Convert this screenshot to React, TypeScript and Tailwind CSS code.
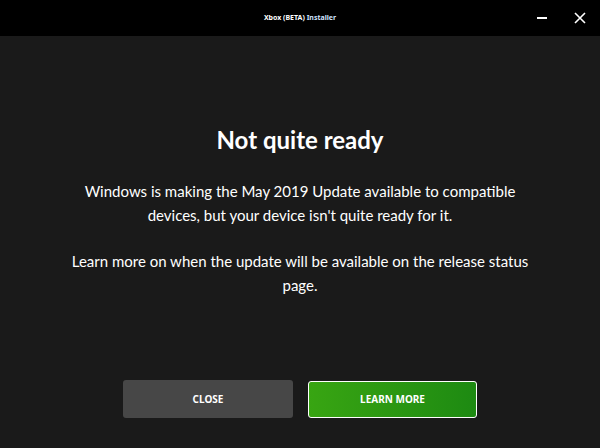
export default function App() {
  return (
    <div className="w-[600px] h-[448px] flex flex-col bg-[#1a1a1a] text-white overflow-hidden" style={{ fontFamily: 'Lato, "Noto Sans", sans-serif' }}>
      <div className="h-9 bg-black flex items-center relative shrink-0">
        <div className="flex-1 text-center text-[7px] font-bold" style={{ fontFamily: '"Noto Sans", sans-serif' }}>
          Xbox (BETA) <span className="text-[#cfe3ff]">Installer</span>
        </div>
        <div className="absolute right-0 top-0 h-9 flex items-center">
          <button className="w-9 h-9 flex items-center justify-center">
            <span className="block w-[10px] h-[2px] bg-white" />
          </button>
          <button className="w-10 h-9 flex items-center justify-center">
            <svg width="12" height="12" viewBox="0 0 12 12" stroke="white" strokeWidth="1.6">
              <path d="M1 1L11 11M11 1L1 11" />
            </svg>
          </button>
        </div>
      </div>

      <div className="flex-1 flex flex-col items-center">
        <h1 className="mt-[86px] text-[24px] font-bold leading-[36px]">Not quite ready</h1>
        <div className="mt-[21px] w-[480px] text-center text-[15px] leading-[24px]">
          <p>Windows is making the May 2019 Update available to compatible devices, but your device isn't quite ready for it.</p>
          <p className="mt-[22px]">Learn more on when the update will be available on the release status page.</p>
        </div>

        <div className="mt-auto mb-[30px] flex gap-[15px]">
          <button className="w-[170px] h-[38px] rounded-[3px] bg-[#474747] text-[10px] font-bold" style={{ fontFamily: '"Noto Sans", sans-serif' }}>CLOSE</button>
          <button className="w-[169px] h-[37px] mt-[1px] rounded-[3px] border border-white bg-gradient-to-r from-[#38a512] to-[#1d8a12] text-[10px] font-bold" style={{ fontFamily: '"Noto Sans", sans-serif' }}>LEARN MORE</button>
        </div>
      </div>
    </div>
  )
}
